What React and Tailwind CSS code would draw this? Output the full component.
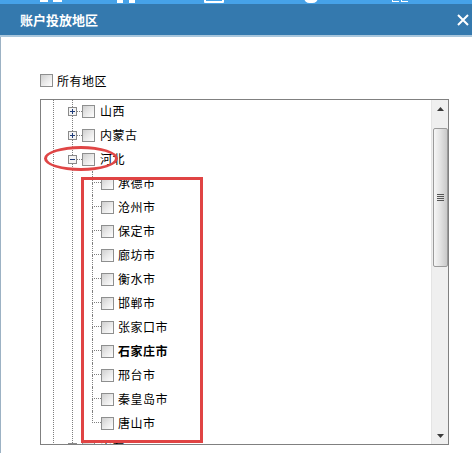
import React from 'react';

const dot = 'border-dotted border-[#7f7f7f]';

function CheckBox({ className = '' }) {
  return (
    <span
      className={
        'block w-[13px] h-[13px] shrink-0 border border-[#8e8f8f] bg-linear-to-br from-[#cfcfcf] via-[#e9e9e9] to-[#ffffff] ' +
        className
      }
    />
  );
}

function Expander({ open }) {
  return (
    <svg width="9" height="9" viewBox="0 0 9 9" className="shrink-0 block">
      <rect x="0.5" y="0.5" width="8" height="8" fill="#f4f4f4" stroke="#8a8a8a" />
      <path d="M2 4.5H7" stroke="#1f3c7a" />
      {!open && <path d="M4.5 2V7" stroke="#1f3c7a" />}
    </svg>
  );
}

function Province({ name, open, children }) {
  return (
    <div>
      <div className="flex items-center h-[24px] -ml-[5px]">
        <Expander open={open} />
        <span className={'w-[5px] border-t ' + dot} />
        <CheckBox />
        <span className="ml-[5px]">{name}</span>
      </div>
      {children}
    </div>
  );
}

function City({ name, last, bold }) {
  return (
    <div className="flex h-[24px]">
      <div className="w-[9px] flex flex-col shrink-0">
        <div className={'h-[12px] border-l border-b ' + dot} />
        <div className={last ? 'h-[12px]' : 'h-[12px] border-l ' + dot} />
      </div>
      <div className="flex items-center">
        <CheckBox />
        <span className={'ml-[4px] ' + (bold ? 'font-bold' : '')}>{name}</span>
      </div>
    </div>
  );
}

const cities = ['承德市', '沧州市', '保定市', '廊坊市', '衡水市', '邯郸市', '张家口市', '石家庄市', '邢台市', '秦皇岛市', '唐山市'];

function Arrow({ down }) {
  return (
    <svg width="7" height="4" viewBox="0 0 7 4" className="block">
      {down ? (
        <path d="M0 0H7L3.5 4Z" fill="#3a3a3a" />
      ) : (
        <path d="M0 4H7L3.5 0Z" fill="#3a3a3a" />
      )}
    </svg>
  );
}

export default function App() {
  return (
    <div className="relative w-[472px] h-[453px] overflow-hidden bg-white flex flex-col text-[12px] tracking-[0.5px] text-black font-['Noto_Sans_CJK_SC','Liberation_Sans',sans-serif]">
      {/* toolbar strip above the dialog */}
      <div className="relative h-[4px] bg-[#46a2e8] shrink-0">
        <span className="absolute left-[40px] top-0 w-[8px] h-[2px] bg-white" />
        <span className="absolute left-[53px] top-0 w-[9px] h-[2px] bg-white" />
        <span className="absolute left-[117px] top-0 w-[6px] h-[3px] bg-white" />
        <span className="absolute left-[129px] top-0 w-[6px] h-[3px] bg-white" />
        <span className="absolute left-[204px] -top-[4px] w-[20px] h-[7px] border-2 border-white rounded-[1px]" />
        <span className="absolute left-[304px] -top-[8px] w-[14px] h-[11px] bg-white rounded-full" />
        <span className="absolute left-[392px] -top-[3px] w-[7px] h-[5px] border-l border-b border-white" />
        <span className="absolute left-[401px] -top-[3px] w-[7px] h-[5px] border-l border-b border-white" />
      </div>

      {/* title bar */}
      <div className="h-[31px] shrink-0 bg-[#3479ae] flex items-center justify-between pl-5 pr-[3px]">
        <span className="text-white font-bold text-[13px] leading-none tracking-normal">账户投放地区</span>
        <svg width="12" height="12" viewBox="0 0 12 12" className="block">
          <path d="M1 1L11 11M11 1L1 11" stroke="#fff" strokeWidth="2" />
        </svg>
      </div>
      <div className="h-[2px] shrink-0 bg-[#a8c6dc]" />

      {/* body */}
      <div className="flex-1 border-l border-[#9cb2c4] pl-[39px] pt-[37px]">
        <div className="flex items-center h-[13px]">
          <CheckBox />
          <span className="ml-[4px]">所有地区</span>
        </div>

        <div className="mt-[12px] w-[409px] h-[346px] border border-[#808080] flex">
          <div className="flex-1 overflow-hidden">
            <div className={'ml-[12px] border-l -mt-px h-[400px] ' + dot}>
              <div className={'ml-[18px] border-l h-full ' + dot}>
                <Province name="山西" />
                <Province name="内蒙古" />
                <Province name="河北" open>
                  <div className="ml-[19px]">
                    {cities.map((c, i) => (
                      <City key={c} name={c} last={i === cities.length - 1} bold={c === '石家庄市'} />
                    ))}
                  </div>
                </Province>
                <Province name="山东" />
              </div>
            </div>
          </div>

          {/* scrollbar */}
          <div className="w-[17px] shrink-0 bg-[#efefef] border-l border-[#e4e4e4] flex flex-col items-center">
            <div className="h-[17px] w-full flex items-center justify-center">
              <Arrow />
            </div>
            <div className="mt-[11px] w-[15px] h-[139px] border border-[#9a9a9a] rounded-[2px] bg-linear-to-r from-[#f6f6f6] via-[#e2e2e2] to-[#c9c9c9] flex flex-col items-center justify-center gap-px">
              <span className="w-[7px] h-px bg-[#555]" />
              <span className="w-[7px] h-px bg-[#555]" />
              <span className="w-[7px] h-px bg-[#555]" />
              <span className="w-[7px] h-px bg-[#555]" />
            </div>
            <div className="flex-1" />
            <div className="h-[17px] w-full flex items-center justify-center">
              <Arrow down />
            </div>
          </div>
        </div>
      </div>

      {/* red annotations */}
      <div className="absolute left-[44px] top-[146px] w-[74px] h-[25px] border-[3px] border-[#e04646] rounded-[50%]" />
      <div className="absolute left-[81px] top-[177px] w-[122px] h-[266px] border-[3px] border-[#e04444]" />
    </div>
  );
}
